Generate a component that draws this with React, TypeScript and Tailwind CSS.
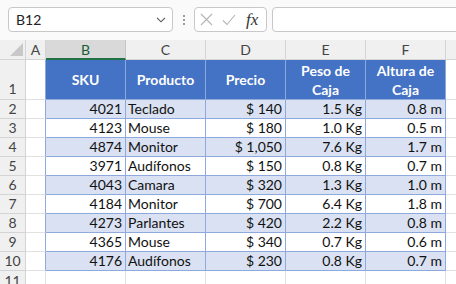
import React from 'react';

const rows = [
  ['4021', 'Teclado', '$ 140', '1.5 Kg', '0.8 m'],
  ['4123', 'Mouse', '$ 180', '1.0 Kg', '0.5 m'],
  ['4874', 'Monitor', '$ 1,050', '7.6 Kg', '1.7 m'],
  ['3971', 'Audífonos', '$ 150', '0.8 Kg', '0.7 m'],
  ['4043', 'Camara', '$ 320', '1.3 Kg', '1.0 m'],
  ['4184', 'Monitor', '$ 700', '6.4 Kg', '1.8 m'],
  ['4273', 'Parlantes', '$ 420', '2.2 Kg', '0.8 m'],
  ['4365', 'Mouse', '$ 340', '0.7 Kg', '0.6 m'],
  ['4176', 'Audífonos', '$ 230', '0.8 Kg', '0.7 m'],
];

const letters = ['C', 'D', 'E', 'F'];

function RowHead({ n, tall }: { n: number; tall?: boolean }) {
  return (
    <div
      className={`w-[26px] shrink-0 bg-[#f0f0f0] border-r border-b border-[#d4d4d4] text-[#444] text-[14px] flex justify-center ${
        tall ? 'items-end' : 'items-center'
      }`}
    >
      {n}
    </div>
  );
}

export default function App() {
  return (
    <div className="w-[456px] h-[284px] overflow-hidden bg-white font-['Lato',sans-serif]">
      {/* formula bar */}
      <div className="h-[40px] bg-[#fafafa] flex items-start pt-[7px] pl-[8px]">
        <div className="w-[165px] h-[25px] bg-white border border-[#c8c8c8] rounded-[4px] flex items-center justify-between pl-[7px] pr-[6px] text-[14px] text-[#222]">
          <span>B12</span>
          <svg width="10" height="6" viewBox="0 0 10 6" fill="none" stroke="#555" strokeWidth="1.1">
            <path d="M1 0.8 L5 4.8 L9 0.8" />
          </svg>
        </div>
        <div className="w-[21px] h-[25px] flex flex-col items-center justify-center gap-[2px]">
          <span className="w-[2px] h-[2px] bg-[#9a9a9a]" />
          <span className="w-[2px] h-[2px] bg-[#9a9a9a]" />
          <span className="w-[2px] h-[2px] bg-[#9a9a9a]" />
        </div>
        <div className="w-[73px] h-[25px] bg-white border border-[#c8c8c8] rounded-[4px] flex items-center pl-[5px] gap-[9px]">
          <svg width="13" height="13" viewBox="0 0 13 13" stroke="#b4b4b4" strokeWidth="1.1">
            <path d="M1 1 L12 12 M12 1 L1 12" />
          </svg>
          <svg width="14" height="12" viewBox="0 0 14 12" fill="none" stroke="#b4b4b4" strokeWidth="1.1">
            <path d="M1 6.5 L5 10.5 L13 1" />
          </svg>
          <span className="font-['Liberation_Serif',serif] italic text-[17px] leading-none text-[#333] ml-[1px]">fx</span>
        </div>
        <div className="flex-1 h-[25px] ml-[5px] -mr-[6px] bg-white border border-[#c8c8c8] rounded-[4px]" />
      </div>

      {/* column headers */}
      <div className="flex h-[20px] text-[14px] text-[#444]">
        <div className="w-[26px] shrink-0 bg-[#f0f0f0] border-r border-b border-[#d4d4d4] relative">
          <svg className="absolute left-[10px] top-[3px]" width="13" height="13" viewBox="0 0 13 13">
            <path d="M13 0 L13 13 L0 13 Z" fill="#c8c8c8" />
          </svg>
        </div>
        <div className="w-[20px] shrink-0 bg-[#f0f0f0] border-r border-b border-[#d4d4d4] flex items-center justify-center">A</div>
        <div className="w-[80px] shrink-0 bg-[#d9d9d9] border-r border-[#c4c4c4] border-b-2 border-b-[#217346] flex items-center justify-center text-[#185c37] pt-[1px]">
          B
        </div>
        {letters.map((l) => (
          <div key={l} className="w-[80px] shrink-0 bg-[#f0f0f0] border-r border-b border-[#d4d4d4] flex items-center justify-center">
            {l}
          </div>
        ))}
        <div className="flex-1 bg-[#f0f0f0] border-b border-[#d4d4d4]" />
      </div>

      {/* row 1: table header */}
      <div className="flex h-[40px]">
        <RowHead n={1} tall />
        <div className="w-[20px] shrink-0 border-r border-r-[#8ea9db] border-b border-b-[#e1e1e1]" />
        {['SKU', 'Producto', 'Precio', 'Peso de Caja', 'Altura de Caja'].map((h) => (
          <div
            key={h}
            className="w-[80px] shrink-0 bg-[#4472c4] border-r border-b border-[#8ea9db] flex items-center justify-center text-center text-white font-bold text-[14px] leading-[19px] px-[4px]"
          >
            {h}
          </div>
        ))}
        <div className="flex-1 border-b border-[#e1e1e1]" />
      </div>

      {/* data rows */}
      {rows.map((r, i) => {
        const band = i % 2 === 0 ? 'bg-[#d9e1f2]' : 'bg-white';
        return (
          <div key={i} className="flex h-[19px] text-[14px] text-[#111] leading-[18px]">
            <RowHead n={i + 2} />
            <div className="w-[20px] shrink-0 border-r border-r-[#8ea9db] border-b border-b-[#e1e1e1]" />
            {r.map((v, j) => (
              <div
                key={j}
                className={`w-[80px] shrink-0 border-r border-b border-[#8ea9db] ${band} flex items-center whitespace-nowrap ${
                  j === 1 ? 'justify-start pl-[2px]' : 'justify-end pr-[3px]'
                }`}
              >
                {v}
              </div>
            ))}
            <div className="flex-1 border-b border-[#e1e1e1]" />
          </div>
        );
      })}

      {/* row 11 */}
      <div className="flex h-[19px]">
        <RowHead n={11} />
        <div className="w-[20px] shrink-0 border-r border-b border-[#e1e1e1]" />
        {[0, 1, 2, 3, 4].map((k) => (
          <div key={k} className="w-[80px] shrink-0 border-r border-b border-[#e1e1e1]" />
        ))}
        <div className="flex-1 border-b border-[#e1e1e1]" />
      </div>
    </div>
  );
}
